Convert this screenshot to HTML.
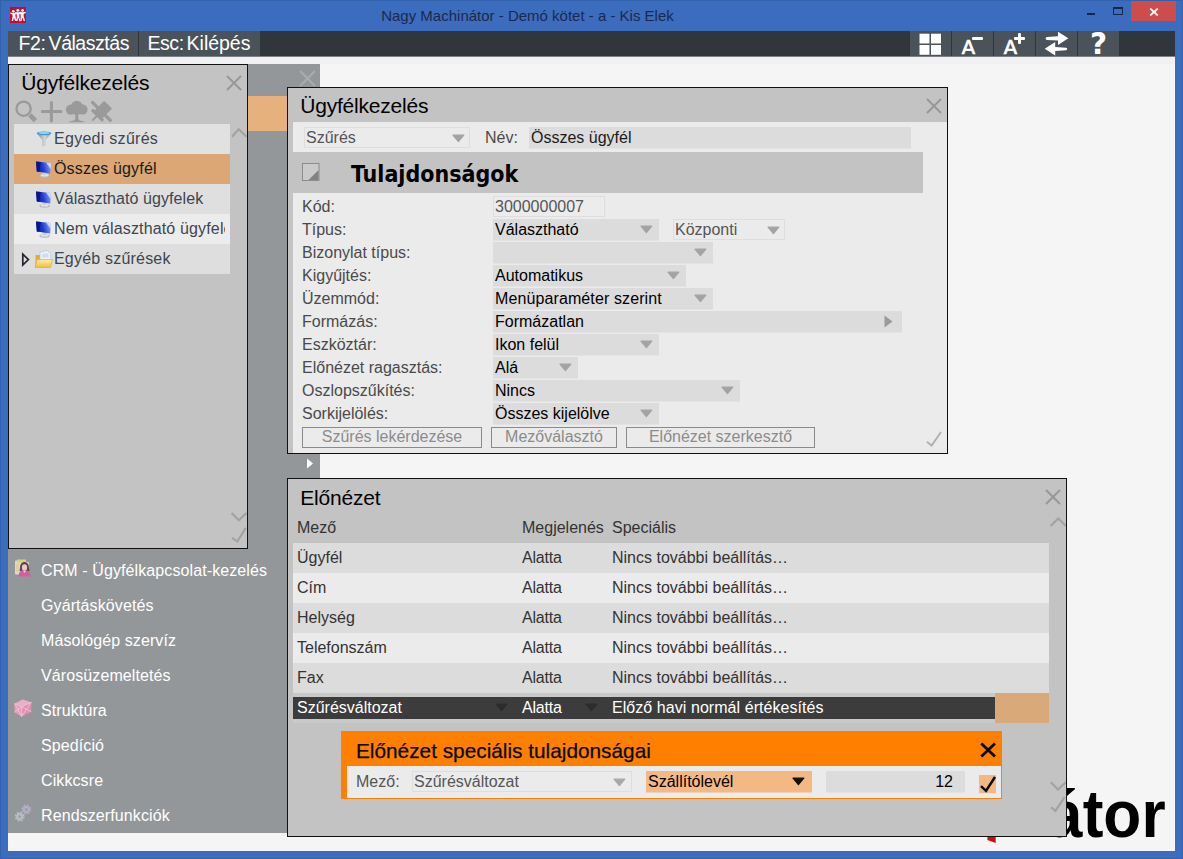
<!DOCTYPE html>
<html lang="hu">
<head>
<meta charset="utf-8">
<title>Nagy Machinátor - Demó kötet - a - Kis Elek</title>
<style>
*{box-sizing:border-box;margin:0;padding:0}
html,body{width:1183px;height:859px;overflow:hidden;background:#3b6cbe;font-family:"Liberation Sans",sans-serif;font-size:16px;color:#3a3a3a}
.abs,#app div,#app span,#app svg{position:absolute}
#app{position:absolute;left:0;top:0;width:1183px;height:859px;background:#3b6cbe;overflow:hidden;box-shadow:inset 0 0 0 1px #3261ae}
.t{white-space:pre;line-height:1}
/* window chrome */
#wtitle{left:0;top:7px;width:1055px;text-align:center;font-size:15px;color:#1c2a48;line-height:18px}
#content{left:8px;top:31px;width:1167px;height:820px;background:#f5f5f5}
#toolbar{left:8px;top:31px;width:1167px;height:25.400px;background:#30363c}
.tb{top:31px;height:25.400px;background:#4a535a;color:#fff;font-size:19px;line-height:25px;white-space:pre}
.ib{top:31px;height:25.400px;width:41px;background:#4a535a}
/* panels */
.panel{background:#c3c3c3;border:1px solid #111}
.ptitle{font-size:21px;color:#000;line-height:24px;white-space:pre;letter-spacing:-0.200px}
.fld{background:#dcdcdc;height:21px;box-shadow:0 1px 0 rgba(220,220,220,.5)}
.lbl{color:#4a4a4a;line-height:21px;white-space:pre}
.val{color:#000;line-height:21px;white-space:pre;left:2px;top:0}
.valg{color:#555;line-height:21px;white-space:pre;left:2px;top:0}
.btn{height:21px;top:427px;border:1px solid #8a8a8a;color:#8c8c8c;text-align:center;line-height:18px;background:#ebebeb;white-space:pre}
.mi{left:41px;color:#fff;font-size:16px;line-height:20px;white-space:pre;letter-spacing:0.1px}
.row{left:293px;width:756px;height:30px}
.cell{line-height:30px;white-space:pre;color:#333}
</style>
</head>
<body>
<div id="app">
<svg style="left:0;top:0" width="0" height="0"><defs><linearGradient id="scr" x1="0" y1="0.500" x2="1" y2="0.300"><stop offset="0" stop-color="#0b1aa6"/><stop offset="0.450" stop-color="#1f3bd6"/><stop offset="1" stop-color="#8fa6f4"/></linearGradient><linearGradient id="fold" x1="0" y1="0" x2="0" y2="1"><stop offset="0" stop-color="#fdf0a8"/><stop offset="1" stop-color="#f0bd38"/></linearGradient></defs></svg>
<!-- WINDOW CHROME -->
<div id="wtitle">Nagy Machinátor - Demó kötet - a - Kis Elek</div>
<div id="content"></div>
<div id="toolbar"></div>
<div style="left:8px;top:56px;width:1167px;height:1px;background:#7d8084;z-index:1"></div>
<div style="left:8px;top:31px;width:1px;height:25.400px;background:#22272c"></div>
<!-- app icon -->
<svg style="left:10px;top:7px" width="16" height="16" viewBox="0 0 16 16"><rect width="16" height="16" fill="#c60b33"/>
<g fill="#fff"><circle cx="3.300" cy="4.300" r="1.350"/><circle cx="7.900" cy="3.300" r="1.400"/><circle cx="12.600" cy="3.400" r="1.400"/>
<path d="M0.300 5.600l2 0.400h2l1.600-1 1 .3h2l1.500-.6 1.300.5h2l2-.6v1.400l-2.200 1 .3 2.600 1.200 4.400h-1.400l-1.300-3.600-.8 3.600h-1.400l.7-4.600-.3-2.300-1.300.5.200 2.600 1 4.400H9.600L8.300 10.400l-.8 3.600H6.100l.8-4.600-.3-2.400-1.300.6.200 2 1 4.400H5.100L3.900 10.600 3 14H1.600l1-4.400-.2-2.200-2.100-.6z"/></g></svg>
<!-- window buttons -->
<div style="left:1087px;top:13px;width:8px;height:2px;background:#14254f"></div>
<div style="left:1113px;top:7px;width:10px;height:8px;border:1px solid #14254f;border-top-width:2px"></div>
<div style="left:1131px;top:1px;width:45px;height:20px;background:#cc4d4c"></div>
<svg style="left:1149px;top:8px" width="10" height="8" viewBox="0 0 10 8"><path d="M1.200 0.500L8.800 7.500M8.800 0.500L1.200 7.500" stroke="#fff" stroke-width="1.700" fill="none"/></svg>
<!-- toolbar buttons -->
<div style="left:8px;top:56px;width:1167px;height:7.600px;background:#f1f1f3"></div>
<div class="tb" style="left:8px;width:130px"><span class="t" style="left:10.500px;top:3px;font-size:19.500px;letter-spacing:-0.350px">F2:</span><span class="t" style="left:40.600px;top:3px;font-size:19.500px;letter-spacing:-0.470px">Választás</span></div>
<div class="tb" style="left:139px;width:121px"><span class="t" style="left:8.500px;top:3px;font-size:19.500px;letter-spacing:-0.450px">Esc:</span><span class="t" style="left:47.600px;top:3px;font-size:19.500px;letter-spacing:-0.020px">Kilépés</span></div>
<div class="ib" style="left:910px"><svg style="left:9px;top:1px" width="24" height="23" viewBox="0 0 24 23"><g fill="#fff"><rect x="0.500" y="1.700" width="10" height="9.800"/><rect x="12" y="1.700" width="10" height="9.800"/><rect x="0.500" y="13" width="10" height="9.800"/><rect x="12" y="13" width="10" height="9.800"/></g></svg></div>
<div class="ib" style="left:952px"><span class="t" style="left:9.800px;top:6.500px;font:normal 19.500px 'DejaVu Sans',sans-serif;color:#fff;line-height:1;-webkit-text-stroke:0.700px #fff">A</span><div style="left:20px;top:6px;width:11px;height:3px;background:#fff;border-radius:1px"></div></div>
<div class="ib" style="left:994px"><span class="t" style="left:9.800px;top:6.500px;font:normal 19.500px 'DejaVu Sans',sans-serif;color:#fff;line-height:1;-webkit-text-stroke:0.700px #fff">A</span><div style="left:20px;top:6px;width:11px;height:3px;background:#fff;border-radius:1px"></div><div style="left:24px;top:2px;width:3px;height:11px;background:#fff;border-radius:1px"></div></div>
<div class="ib" style="left:1036px"><svg style="left:8px;top:1px;overflow:visible" width="26" height="24" viewBox="0 0 26 24"><g fill="#fff"><path d="M1.600 6.400Q1.600 5 3 4.900L14 4.200V-0.200L24.300 6.200 14 12.900V8.600L3 7.900Q1.600 7.800 1.600 6.400z"/><path d="M0.700 16.800L11.200 10.100V14.900L22 15.700Q23.200 15.800 23.200 17 23.200 18.100 22 18.200L11.200 18.900V23.600z"/></g></svg></div>
<div class="ib" style="left:1078px"><span class="t" style="left:12px;top:0.500px;font:bold 29.500px 'DejaVu Sans',sans-serif;color:#fff;line-height:25px">?</span></div>

<!-- sidebar -->
<div style="left:8px;top:64px;width:312px;height:768.700px;background:#94979a"></div>
<div style="left:247px;top:96px;width:73px;height:35px;background:#e7b17e"></div>
<svg style="left:298.500px;top:70px" width="17" height="17" viewBox="0 0 17 17"><path d="M1 1L16 16M16 1L1 16" stroke="#a9acae" stroke-width="2" fill="none"/></svg>
<svg style="left:306px;top:458px" width="8" height="11" viewBox="0 0 8 11"><path d="M1 0.500L7 5.500L1 10.500z" fill="#fff"/></svg>
<div class="mi" style="top:561px">CRM - Ügyfélkapcsolat-kezelés</div>
<div class="mi" style="top:596px">Gyártáskövetés</div>
<div class="mi" style="top:631px">Másológép szervíz</div>
<div class="mi" style="top:666px">Városüzemeltetés</div>
<div class="mi" style="top:701px">Struktúra</div>
<div class="mi" style="top:736px">Spedíció</div>
<div class="mi" style="top:771px">Cikkcsre</div>
<div class="mi" style="top:806px">Rendszerfunkciók</div>
<!-- sidebar icons -->
<svg style="left:14px;top:558px;opacity:.85" width="18" height="20" viewBox="0 0 18 20"><rect x="1" y="2.500" width="11" height="14" rx="1" fill="#efe6d2"/><rect x="3" y="1.500" width="9" height="3" fill="#e6df6a"/><rect x="2" y="6" width="3" height="8" fill="#f0d9a0"/><rect x="10" y="4" width="5" height="9" rx="1" fill="#f2ead8"/><path d="M6 10c0-4 2-6 4.500-6S15 6 15 10l.5 3h-10z" fill="#4a3d3a"/><ellipse cx="10.500" cy="9.500" rx="2.600" ry="3.200" fill="#f6d6cf"/><path d="M4.500 18.500c0-4.500 2.500-6.500 6-6.500s6 2 6 6.500z" fill="#e055a8"/><path d="M9 12.500l1.500 2.500 1.500-2.500z" fill="#f8dfe0"/></svg>
<svg style="left:14px;top:699px;opacity:.9" width="19" height="19" viewBox="0 0 19 19"><path d="M8.700 0.600L17.300 3.400v9.400L7.700 17.400 0.600 13.300V4.700z" fill="#e88fb6"/><path d="M8.700 0.600L17.300 3.400 7.700 7.800 0.600 4.700z" fill="#f3b4cf"/><path d="M7.700 7.800v9.600L0.600 13.300V4.700z" fill="#ee9dc0"/><path d="M0.600 4.700L7.700 7.800 17.300 3.400M7.700 7.800v9.600M0.600 4.700l7.100 12.700M7.700 7.800L0.600 13.300M7.700 7.800l9.600 5M17.300 3.400L7.700 17.400" stroke="#f7c9dc" stroke-width="0.900" fill="none"/></svg>
<svg style="left:12px;top:802px" width="24" height="24" viewBox="0 0 24 24"><g fill="none"><circle cx="14.300" cy="7.500" r="3.400" stroke="#b3aec3" stroke-width="3.200" stroke-dasharray="1.500 1.170"/><circle cx="14.300" cy="7.500" r="2.400" stroke="#b3aec3" stroke-width="2.400"/><circle cx="7.700" cy="14.600" r="3.400" stroke="#b6bec2" stroke-width="3.200" stroke-dasharray="1.500 1.170"/><circle cx="7.700" cy="14.600" r="2.400" stroke="#b6bec2" stroke-width="2.400"/></g><circle cx="14.300" cy="7.500" r="1.100" fill="#9a96a8"/><circle cx="7.700" cy="14.600" r="1.100" fill="#9aa2a6"/></svg>
<!-- logo -->
<div class="t" style="left:1048px;top:777.500px;font:bold 66.600px 'Liberation Sans',sans-serif;color:#000;line-height:72px;transform:scaleX(0.935);transform-origin:0 0">átor</div>
<svg style="left:986px;top:836px" width="12" height="9" viewBox="0 0 12 9"><path d="M1.400 0h8.300v7L1.400 4z" fill="#c8101a"/></svg>
<!-- panel 1 -->
<div class="panel" style="left:8px;top:64px;width:240px;height:485px"></div>
<div class="ptitle" style="left:21.200px;top:71.400px">Ügyfélkezelés</div>
<svg style="left:226px;top:75px" width="16" height="16" viewBox="0 0 16 16"><path d="M1 1L15 15M15 1L1 15" stroke="#989898" stroke-width="2" fill="none"/></svg>
<!-- panel 1 tool icons -->
<svg style="left:12px;top:96px" width="104" height="30" viewBox="0 0 104 30"><g fill="none" stroke="#9a9a9a"><circle cx="11.600" cy="12.700" r="7.100" stroke-width="2.300"/><path d="M17.800 18.800l5.600 5.800" stroke-width="4.600"/><path d="M30.300 15.600h18.600M39.400 6.500v18.400" stroke-width="3" stroke-linecap="round"/></g>
<g fill="#9a9a9a"><circle cx="64.800" cy="10.300" r="5.600"/><circle cx="59" cy="13.600" r="5.200"/><circle cx="70.600" cy="13.600" r="5"/><circle cx="64.800" cy="14.500" r="4.500"/><path d="M63.300 17h3v5.500c0 1.600 2 2.600 6.200 3v.7h-15.400v-.7c4.200-.4 6.200-1.400 6.200-3z"/>
<g transform="translate(89.400 15.400) rotate(45)"><rect x="-14" y="-1.600" width="28" height="3.200" rx="1"/><rect x="-5.500" y="-9.500" width="11" height="15" rx="1"/><rect x="-8" y="3.800" width="16" height="3.200" rx="1"/><rect x="-1" y="5" width="2" height="8"/></g></g></svg>
<!-- list -->
<div style="left:14px;top:124px;width:216px;height:30px;background:#e1e1e1"></div>
<div style="left:14px;top:154px;width:216px;height:30px;background:#dca774"></div>
<div style="left:14px;top:184px;width:216px;height:30px;background:#dfdfdf"></div>
<div style="left:14px;top:214px;width:216px;height:30px;background:#ececec"></div>
<div style="left:14px;top:244px;width:216px;height:30px;background:#dedede"></div>
<div style="left:54px;top:124px;width:171px;height:150px;overflow:hidden">
<span class="t" style="left:0;top:6px;color:#3c4650;line-height:18px;letter-spacing:0.280px">Egyedi szűrés</span>
<span class="t" style="left:0;top:36px;color:#1a1a1a;line-height:18px;letter-spacing:0.170px">Összes ügyfél</span>
<span class="t" style="left:0;top:66px;color:#3c4650;line-height:18px;letter-spacing:0.080px">Választható ügyfelek</span>
<span class="t" style="left:0;top:96px;color:#3c4650;line-height:18px;letter-spacing:0.150px">Nem választható ügyfelek</span>
<span class="t" style="left:0;top:126px;color:#3c4650;line-height:18px;letter-spacing:0.200px">Egyéb szűrések</span>
</div>
<!-- funnel -->
<svg style="left:36px;top:131px" width="16" height="16" viewBox="0 0 16 16"><defs><linearGradient id="fun" x1="0" y1="0" x2="1" y2="0"><stop offset="0" stop-color="#7f868c"/><stop offset="0.550" stop-color="#d2d6d9"/><stop offset="1" stop-color="#8b9298"/></linearGradient></defs><path d="M0.800 2.200h14.400L9.700 9v5.400l-3.400 1V9z" fill="url(#fun)"/><ellipse cx="8" cy="2.300" rx="7.300" ry="1.900" fill="#3f9bd6"/><ellipse cx="8" cy="2" rx="5.400" ry="0.900" fill="#9bd6f2"/></svg>
<svg style="left:35px;top:161px" width="17" height="18" viewBox="0 0 17 18"><ellipse cx="9.600" cy="14.800" rx="5.200" ry="1.900" fill="#b4b8bd"/><ellipse cx="9.600" cy="14.300" rx="4" ry="1.200" fill="#e6e8ea"/><path d="M7.800 10.500h3.600l.4 3.800h-4.400z" fill="#cdd0d4"/><path d="M1 0.600L16 2 15.300 12.600 1.800 10.600z" fill="url(#scr)"/><path d="M1 0.600L6 1.100 4.200 10.900 1.800 10.600z" fill="#06107a" opacity=".75"/><path d="M11 1.600l5 .4-.4 6z" fill="#dfe6fd" opacity=".8"/></svg>
<svg style="left:35px;top:191px" width="17" height="18" viewBox="0 0 17 18"><ellipse cx="9.600" cy="14.800" rx="5.200" ry="1.900" fill="#b4b8bd"/><ellipse cx="9.600" cy="14.300" rx="4" ry="1.200" fill="#e6e8ea"/><path d="M7.800 10.500h3.600l.4 3.800h-4.400z" fill="#cdd0d4"/><path d="M1 0.600L16 2 15.300 12.600 1.800 10.600z" fill="url(#scr)"/><path d="M1 0.600L6 1.100 4.200 10.900 1.800 10.600z" fill="#06107a" opacity=".75"/><path d="M11 1.600l5 .4-.4 6z" fill="#dfe6fd" opacity=".8"/></svg>
<svg style="left:35px;top:221px" width="17" height="18" viewBox="0 0 17 18"><ellipse cx="9.600" cy="14.800" rx="5.200" ry="1.900" fill="#b4b8bd"/><ellipse cx="9.600" cy="14.300" rx="4" ry="1.200" fill="#e6e8ea"/><path d="M7.800 10.500h3.600l.4 3.800h-4.400z" fill="#cdd0d4"/><path d="M1 0.600L16 2 15.300 12.600 1.800 10.600z" fill="url(#scr)"/><path d="M1 0.600L6 1.100 4.200 10.900 1.800 10.600z" fill="#06107a" opacity=".75"/><path d="M11 1.600l5 .4-.4 6z" fill="#dfe6fd" opacity=".8"/></svg>

<!-- folder + expander -->
<svg style="left:21px;top:252px" width="10" height="15" viewBox="0 0 10 15"><path d="M1.800 2.200l5.600 5.400L1.800 13z" fill="none" stroke="#26262e" stroke-width="1.700" stroke-linejoin="miter"/></svg>
<svg style="left:34px;top:250px" width="19" height="19" viewBox="0 0 19 19"><path d="M1.500 5h5l1.500 1.500h8V17h-14.500z" fill="#e3ac2f"/><path d="M6 2.200l7-1.700 3.500 3 .8 8.500H6z" fill="#eef3fb" stroke="#b5c3da" stroke-width="0.700"/><path d="M8 4l5-.8 1.500 1.300.3 3H8z" fill="#cfdcf2"/><path d="M1 17.500L3 9.500h15.500L16.500 17.500z" fill="url(#fold)" stroke="#dda52a" stroke-width="0.600"/></svg>
<!-- scroll marks -->
<svg style="left:231px;top:127px" width="16" height="12" viewBox="0 0 16 12"><path d="M1 9.700L7.700 2.300L15.500 9.700" fill="none" stroke="#a2a2a2" stroke-width="2.100"/></svg>
<svg style="left:231px;top:511px" width="16" height="12" viewBox="0 0 16 12"><path d="M0.700 2.100L7.800 9.200L15.400 2.100" fill="none" stroke="#a2a2a2" stroke-width="2.100"/></svg>
<svg style="left:230px;top:527px" width="17" height="16" viewBox="0 0 17 16"><path d="M2 10.900L7.300 14.500L15.800 0.900" fill="none" stroke="#a2a2a2" stroke-width="2.100"/></svg>

<!-- panel 2 -->
<div class="panel" style="left:287px;top:87px;width:661px;height:367px"></div>
<div style="left:293px;top:121.500px;width:654px;height:331.500px;background:#ebebeb"></div>
<div class="ptitle" style="left:300.200px;top:94.400px">Ügyfélkezelés</div>
<svg style="left:926px;top:98px" width="16" height="16" viewBox="0 0 16 16"><path d="M1 1L15 15M15 1L1 15" stroke="#989898" stroke-width="2" fill="none"/></svg>
<div class="fld" style="left:304px;top:127px;width:166px;background:#ebebeb;border:1px solid #dedede;box-shadow:none;"><span class="valg" style="top:-1px;left:1px">Szűrés</span><svg style="left:147px;top:6px" width="14" height="9" viewBox="0 0 14 9"><path d="M1 1.200h10.800L6.400 7.600z" fill="#a3a3a3" stroke="#a3a3a3" stroke-width="1.200" stroke-linejoin="round"/></svg></div>
<div class="lbl" style="left:485px;top:127px">Név:</div>
<div class="fld" style="left:529px;top:127px;width:382px"><span class="val" style="color:#1a1a1a">Összes ügyfél</span></div>
<div style="left:293px;top:152px;width:630px;height:41px;background:#c3c3c3"></div>
<svg style="left:302px;top:163px" width="18" height="18" viewBox="0 0 18 18"><rect x="0.500" y="0.500" width="16.500" height="17" fill="#cacaca" stroke="#8c8c8c" stroke-width="1"/><path d="M6.500 17h10V7z" fill="#828282"/></svg>
<div class="t" style="left:351px;top:160px;font:bold 23px 'DejaVu Sans Condensed','DejaVu Sans',sans-serif;color:#000;line-height:28px">Tulajdonságok</div>
<div class="lbl" style="left:302px;top:196px">Kód:</div>
<div class="lbl" style="left:302px;top:219px">Típus:</div>
<div class="lbl" style="left:302px;top:242px">Bizonylat típus:</div>
<div class="lbl" style="left:302px;top:265px">Kigyűjtés:</div>
<div class="lbl" style="left:302px;top:288px">Üzemmód:</div>
<div class="lbl" style="left:302px;top:311px">Formázás:</div>
<div class="lbl" style="left:302px;top:334px">Eszköztár:</div>
<div class="lbl" style="left:302px;top:357px">Előnézet ragasztás:</div>
<div class="lbl" style="left:302px;top:380px">Oszlopszűkítés:</div>
<div class="lbl" style="left:302px;top:403px">Sorkijelölés:</div>
<div class="fld" style="left:493px;top:196px;width:112px;background:#ececec;border:1px solid #dedede;box-shadow:none"><span class="valg" style="top:-1px;left:1px">3000000007</span></div>
<div class="fld" style="left:493px;top:219px;width:166px;background:#dcdcdc;"><span class="val">Választható</span><svg style="left:147px;top:6px" width="14" height="9" viewBox="0 0 14 9"><path d="M1 1.200h10.800L6.400 7.600z" fill="#a3a3a3" stroke="#a3a3a3" stroke-width="1.200" stroke-linejoin="round"/></svg></div>
<div class="fld" style="left:673px;top:219px;width:112px;background:#ebebeb;border:1px solid #dedede;box-shadow:none;"><span class="valg" style="top:-1px;left:1px">Központi</span><svg style="left:93px;top:6px" width="14" height="9" viewBox="0 0 14 9"><path d="M1 1.200h10.800L6.400 7.600z" fill="#a3a3a3" stroke="#a3a3a3" stroke-width="1.200" stroke-linejoin="round"/></svg></div>
<div class="fld" style="left:493px;top:242px;width:220px;background:#dcdcdc;"><span class="val"></span><svg style="left:201px;top:6px" width="14" height="9" viewBox="0 0 14 9"><path d="M1 1.200h10.800L6.400 7.600z" fill="#a3a3a3" stroke="#a3a3a3" stroke-width="1.200" stroke-linejoin="round"/></svg></div>
<div class="fld" style="left:493px;top:265px;width:193px;background:#dcdcdc;"><span class="val">Automatikus</span><svg style="left:174px;top:6px" width="14" height="9" viewBox="0 0 14 9"><path d="M1 1.200h10.800L6.400 7.600z" fill="#a3a3a3" stroke="#a3a3a3" stroke-width="1.200" stroke-linejoin="round"/></svg></div>
<div class="fld" style="left:493px;top:288px;width:220px;background:#dcdcdc;"><span class="val" style="letter-spacing:0.110px">Menüparaméter szerint</span><svg style="left:201px;top:6px" width="14" height="9" viewBox="0 0 14 9"><path d="M1 1.200h10.800L6.400 7.600z" fill="#a3a3a3" stroke="#a3a3a3" stroke-width="1.200" stroke-linejoin="round"/></svg></div>
<div class="fld" style="left:493px;top:311px;width:409px"><span class="val">Formázatlan</span><svg style="left:391px;top:4px" width="9" height="13" viewBox="0 0 9 13"><path d="M0.500 0.500v12L8.500 6.500z" fill="#9a9a9a"/></svg></div>
<div class="fld" style="left:493px;top:334px;width:166px;background:#dcdcdc;"><span class="val">Ikon felül</span><svg style="left:147px;top:6px" width="14" height="9" viewBox="0 0 14 9"><path d="M1 1.200h10.800L6.400 7.600z" fill="#a3a3a3" stroke="#a3a3a3" stroke-width="1.200" stroke-linejoin="round"/></svg></div>
<div class="fld" style="left:493px;top:357px;width:85px;background:#dcdcdc;"><span class="val">Alá</span><svg style="left:66px;top:6px" width="14" height="9" viewBox="0 0 14 9"><path d="M1 1.200h10.800L6.400 7.600z" fill="#a3a3a3" stroke="#a3a3a3" stroke-width="1.200" stroke-linejoin="round"/></svg></div>
<div class="fld" style="left:493px;top:380px;width:247px;background:#dcdcdc;"><span class="val">Nincs</span><svg style="left:228px;top:6px" width="14" height="9" viewBox="0 0 14 9"><path d="M1 1.200h10.800L6.400 7.600z" fill="#a3a3a3" stroke="#a3a3a3" stroke-width="1.200" stroke-linejoin="round"/></svg></div>
<div class="fld" style="left:493px;top:403px;width:166px;background:#dcdcdc;"><span class="val">Összes kijelölve</span><svg style="left:147px;top:6px" width="14" height="9" viewBox="0 0 14 9"><path d="M1 1.200h10.800L6.400 7.600z" fill="#a3a3a3" stroke="#a3a3a3" stroke-width="1.200" stroke-linejoin="round"/></svg></div>
<div class="btn" style="left:302px;width:180px">Szűrés lekérdezése</div>
<div class="btn" style="left:491px;width:126px">Mezőválasztó</div>
<div class="btn" style="left:626px;width:189px">Előnézet szerkesztő</div>
<svg style="left:925px;top:430px" width="18" height="17" viewBox="0 0 18 17"><path d="M1.900 11.800L6.600 15.600L16 2" fill="none" stroke="#b0b0b0" stroke-width="1.900"/></svg>

<!-- panel 3 -->
<div class="panel" style="left:287px;top:478px;width:780px;height:359px"></div>
<div class="ptitle" style="left:300.200px;top:486.400px">Előnézet</div>
<svg style="left:1045px;top:489px" width="16" height="16" viewBox="0 0 16 16"><path d="M1 1L15 15M15 1L1 15" stroke="#989898" stroke-width="2" fill="none"/></svg>
<div class="cell" style="left:297px;top:513px">Mező</div>
<div class="cell" style="left:522px;top:513px">Megjelenés</div>
<div class="cell" style="left:612px;top:513px">Speciális</div>
<div class="row" style="top:543px;background:#dcdcdc"><span class="cell" style="left:4px;top:0">Ügyfél</span><span class="cell" style="left:229px;top:0;letter-spacing:-0.200px">Alatta</span><span class="cell" style="left:319px;top:0">Nincs további beállítás…</span></div>
<div class="row" style="top:573px;background:#ebebeb"><span class="cell" style="left:4px;top:0">Cím</span><span class="cell" style="left:229px;top:0;letter-spacing:-0.200px">Alatta</span><span class="cell" style="left:319px;top:0">Nincs további beállítás…</span></div>
<div class="row" style="top:603px;background:#dcdcdc"><span class="cell" style="left:4px;top:0">Helység</span><span class="cell" style="left:229px;top:0;letter-spacing:-0.200px">Alatta</span><span class="cell" style="left:319px;top:0">Nincs további beállítás…</span></div>
<div class="row" style="top:633px;background:#ebebeb"><span class="cell" style="left:4px;top:0">Telefonszám</span><span class="cell" style="left:229px;top:0;letter-spacing:-0.200px">Alatta</span><span class="cell" style="left:319px;top:0">Nincs további beállítás…</span></div>
<div class="row" style="top:663px;background:#dcdcdc"><span class="cell" style="left:4px;top:0">Fax</span><span class="cell" style="left:229px;top:0;letter-spacing:-0.200px">Alatta</span><span class="cell" style="left:319px;top:0">Nincs további beállítás…</span></div>
<div style="left:293px;top:693px;width:702px;height:30px;background:#c9c9c9"></div>
<div style="left:293px;top:697px;width:702px;height:21.700px;background:#3c3c3c"></div>
<div style="left:995px;top:693px;width:54px;height:30px;background:#d9a97a"></div>
<div class="t" style="left:297px;top:697px;color:#fff;line-height:21px">Szűrésváltozat</div>
<div class="t" style="left:522px;top:697px;color:#fff;line-height:21px;letter-spacing:-0.200px">Alatta</div>
<div class="t" style="left:612px;top:697px;color:#fff;line-height:21px;letter-spacing:0.060px">Előző havi normál értékesítés</div>
<svg style="left:495px;top:703px" width="14" height="9" viewBox="0 0 14 9"><path d="M1 1.200h10.800L6.400 7.600z" fill="#2c2c2c" stroke="#2c2c2c" stroke-width="1.200" stroke-linejoin="round"/></svg><svg style="left:585px;top:703px" width="14" height="9" viewBox="0 0 14 9"><path d="M1 1.200h10.800L6.400 7.600z" fill="#2c2c2c" stroke="#2c2c2c" stroke-width="1.200" stroke-linejoin="round"/></svg>
<svg style="left:1049px;top:516px" width="17" height="12" viewBox="0 0 17 12"><path d="M1.500 10L9.200 2.500L17 10" fill="none" stroke="#a2a2a2" stroke-width="2.100"/></svg>
<svg style="left:1049px;top:780px" width="17" height="12" viewBox="0 0 17 12"><path d="M1.800 2.300L9 9.500L17 2" fill="none" stroke="#a2a2a2" stroke-width="2.100"/></svg>
<svg style="left:1049px;top:795px" width="18" height="18" viewBox="0 0 18 18"><path d="M2 12.300L6.400 15.900L15.600 2.100" fill="none" stroke="#a2a2a2" stroke-width="2.100"/></svg>
<!-- orange dialog -->
<div style="left:341px;top:731px;width:661px;height:68px;background:#ff8000"></div>
<div style="left:347px;top:766px;width:654px;height:31.800px;background:#ebebeb"></div>
<div class="t" style="left:356px;top:739px;font-size:20.800px;color:#0a0a0a;line-height:24px;-webkit-text-stroke:0.250px #0a0a0a">Előnézet speciális tulajdonságai</div>
<svg style="left:979px;top:741px" width="18" height="18" viewBox="0 0 18 18"><path d="M2.300 2.400L16 15.600M16 2.400L2.300 15.600" stroke="#0a0a0a" stroke-width="2.800" fill="none"/></svg>
<div class="lbl" style="left:356px;top:771px;color:#555">Mező:</div>
<div class="fld" style="left:412px;top:771px;width:220px;background:#ebebeb;border:1px solid #dedede;box-shadow:none"><span class="valg" style="top:-1px;left:1px">Szűrésváltozat</span><svg style="left:200px;top:6px" width="14" height="9" viewBox="0 0 14 9"><path d="M1 1.200h10.800L6.400 7.600z" fill="#a8a8a8" stroke="#a8a8a8" stroke-width="1.200" stroke-linejoin="round"/></svg></div>
<div class="fld" style="left:646px;top:771px;width:166px;background:#f4b885;box-shadow:0 1px 0 rgba(244,184,133,.5)"><span class="val">Szállítólevél</span><svg style="left:146px;top:6px" width="14" height="9" viewBox="0 0 14 9"><path d="M1 1.200h10.800L6.400 7.600z" fill="#111" stroke="#111" stroke-width="1.200" stroke-linejoin="round"/></svg></div>
<div class="fld" style="left:826px;top:771px;width:139px"><span class="val" style="left:auto;right:12px">12</span></div>
<div style="left:979px;top:775px;width:17px;height:18px;background:#f4b885"></div>
<svg style="left:979px;top:774px" width="18" height="19" viewBox="0 0 18 19"><path d="M2 12.200L7 16.900L16 3" fill="none" stroke="#0a0a0a" stroke-width="2.500"/></svg>

</div>
</body>
</html>
